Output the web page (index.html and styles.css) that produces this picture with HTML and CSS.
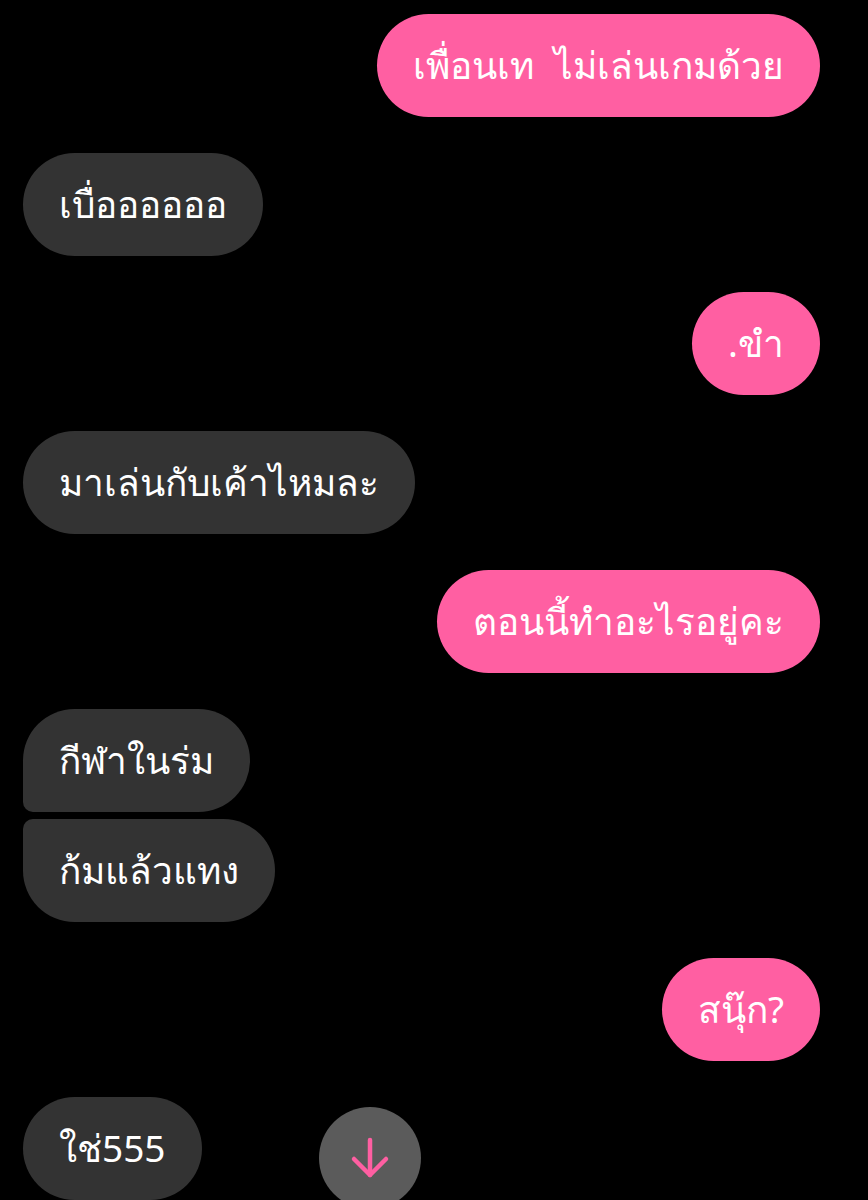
FILE: index.html
```html
<!DOCTYPE html>
<html lang="th">
<head>
    <meta charset="UTF-8">
    <meta name="viewport" content="width=device-width, initial-scale=1.0">
    <title>Chat</title>
    <link rel="stylesheet" href="styles.css">
</head>
<body>
    <div class="chat">
        <div class="msg me">เพื่อนเท ไม่เล่นเกมด้วย</div>
        <div class="msg them">เบื่ออออออ</div>
        <div class="msg me">.ขำ</div>
        <div class="msg them">มาเล่นกับเค้าไหมละ</div>
        <div class="msg me">ตอนนี้ทำอะไรอยู่คะ</div>
        <div class="group">
            <div class="msg them first">กีฬาในร่ม</div>
            <div class="msg them last">ก้มแล้วแทง</div>
        </div>
        <div class="msg me">สนุ๊ก?</div>
        <div class="msg them">ใช่555</div>
    </div>
    <button class="scroll-btn" type="button">
        <svg width="42" height="44" viewBox="0 0 42 44" fill="none" stroke="#ff5fa2" stroke-width="4.5" stroke-linecap="round" stroke-linejoin="round">
            <path d="M21 4 V39"/>
            <path d="M5 23 L21 39 L37 23"/>
        </svg>
    </button>
</body>
</html>
```

FILE: styles.css
```css
* {
    padding: 0;
    margin: 0;
    box-sizing: border-box;
}
body {
    position: relative;
    background: #000;
    color: #fff;
    font-family: "Noto Sans", sans-serif;
    height: 1200px;
    overflow: hidden;
}
.chat {
    display: flex;
    flex-direction: column;
    row-gap: 36px;
    padding: 14px 48px 0 23px;
}
.msg {
    height: 103px;
    padding: 0 36px;
    border-radius: 52px;
    font-size: 37px;
    word-spacing: 10px;
    display: flex;
    align-items: center;
    white-space: nowrap;
}
.me {
    align-self: flex-end;
    background: #ff5fa2;
}
.them {
    align-self: flex-start;
    background: #333;
}
.group {
    display: flex;
    flex-direction: column;
    align-items: flex-start;
    row-gap: 7px;
}
.first {
    border-bottom-left-radius: 10px;
}
.last {
    border-top-left-radius: 10px;
}
.scroll-btn {
    position: absolute;
    left: 319px;
    top: 1107px;
    width: 102px;
    height: 102px;
    border: none;
    border-radius: 50%;
    background: #5b5b5b;
    display: flex;
    align-items: center;
    justify-content: center;
}
```
